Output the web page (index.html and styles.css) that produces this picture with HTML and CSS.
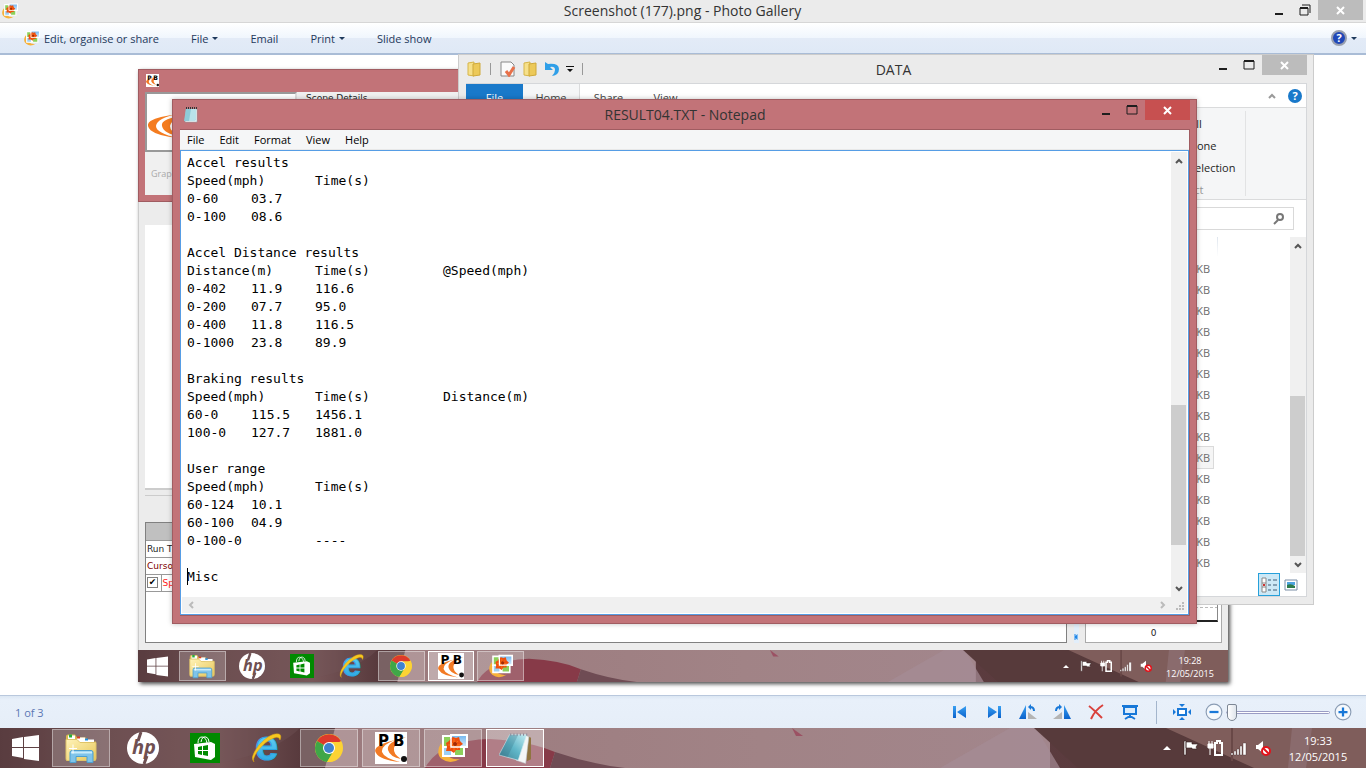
FILE: index.html
```html
<!DOCTYPE html>
<html lang="en">
<head>
  <meta charset="UTF-8">
  <meta name="viewport" content="width=device-width, initial-scale=1.0">
  <title>Screenshot (177).png - Photo Gallery</title>
  <link rel="stylesheet" href="styles.css">
</head>
<body>
  <!-- Icons -->
  <svg class="sprite" aria-hidden="true">
    <defs>
      <linearGradient id="gFolder" x1="0" y1="0" x2="1" y2="1"><stop offset="0" stop-color="#fff3b8"/><stop offset="1" stop-color="#e8c75a"/></linearGradient>
      <linearGradient id="gPad" x1="0" y1="1" x2="1" y2="0"><stop offset="0" stop-color="#3f7f92"/><stop offset=".5" stop-color="#5fb6c8"/><stop offset="1" stop-color="#c4ecf2"/></linearGradient>
      <linearGradient id="gIe" x1="0" y1="0" x2="0" y2="1"><stop offset="0" stop-color="#7fe0fb"/><stop offset="1" stop-color="#1f9fe0"/></linearGradient>
      <linearGradient id="gSky" x1="0" y1="0" x2="0" y2="1"><stop offset="0" stop-color="#6fb4ee"/><stop offset="1" stop-color="#d9eefc"/></linearGradient>
      <linearGradient id="gBlue" x1="0" y1="0" x2="0" y2="1"><stop offset="0" stop-color="#39a0f2"/><stop offset="1" stop-color="#0a62cc"/></linearGradient>
      <linearGradient id="gWood" x1="0" y1="0" x2="1" y2="0"><stop offset="0" stop-color="#4c2f32"/><stop offset=".08" stop-color="#6b4c4e"/><stop offset=".16" stop-color="#785759"/><stop offset=".22" stop-color="#583a3d"/><stop offset="1" stop-color="#5c3c3f"/></linearGradient>
      <linearGradient id="gPink" x1="0" y1="0" x2="1" y2="0"><stop offset="0" stop-color="#9b7a7d"/><stop offset=".6" stop-color="#a18386"/><stop offset="1" stop-color="#a2868c"/></linearGradient>
    </defs>

    <symbol id="wall" viewBox="0 0 1366 40" preserveAspectRatio="none">
      <rect width="1366" height="40" fill="url(#gWood)"/>
      <path d="M0 0H300Q270 30 190 40H0z" fill="#74555a" opacity=".35"/>
      <path d="M335 0H1050V40H325z" fill="url(#gPink)"/>
      <path d="M425 40Q440 12 490 11Q530 13 555 24L550 40z" fill="#873a48"/>
      <path d="M555 24Q590 36 625 40H550z" fill="#6f4c54"/>
      <path d="M792 0l11 8-7 0z" fill="#98304c" opacity=".6"/>
      <path d="M940 40L1010 0H1036L1060 40z" fill="#a58c96" opacity=".7"/>
      <path d="M1034 0H1168L1256 40H1078z" fill="#573a3b"/>
      <path d="M1166 0H1366V40H1254z" fill="#7f5d5b"/>
      <path d="M1232 0v33" stroke="#694847" stroke-width="2"/>
      <path d="M1292 0h20l-6 40h-18z" fill="#967a80" opacity=".5"/>
    </symbol>
    <symbol id="win" viewBox="0 0 27 26"><path d="M0 4l11-2v10H0zM12 2l15-2v12H12zM0 13h11v10L0 21zM12 13h15v13l-15-2z" fill="#fff"/></symbol>
    <symbol id="explorer" viewBox="0 0 32 29">
      <path d="M1 3q0-2 2-2h7l2 3h9l2 4h8v19H1z" fill="#d9b850"/>
      <path d="M3 2h7v5H3zM12 4h8v5h-8zM20 6h9v5h-9z" fill="#fff"/>
      <path d="M4 1h3v3H4z" fill="#24ad3b"/><path d="M12 3h3v2h-3z" fill="#dc3e22"/><path d="M20 5h3v2h-3z" fill="#1f8fe0"/>
      <path d="M1 6h11l3 3h16v16q0 2-2 2H2q-1 0-1-2z" fill="url(#gFolder)" stroke="#e0c468"/>
      <path d="M5 29V19q0-2 2-2h19q2 0 2 2v10h-6v-6H11v6z" fill="#7fc4ea" stroke="#4da0d0"/>
      <path d="M6 19h21" stroke="#c9ecfb" stroke-width="2"/>
      <path d="M8 11v9M4 15h8" stroke="#fff"/>
    </symbol>
    <symbol id="hp" viewBox="0 0 32 32">
      <circle cx="16" cy="16" r="16" fill="#fff"/>
      <text x="5" y="22" class="hp-text">hp</text>
      <path d="M14 0l-3 9M20 24l-3 8" stroke="#6f5052" stroke-width="3"/>
    </symbol>
    <symbol id="store" viewBox="0 0 30 30">
      <rect width="30" height="30" fill="#008a00"/>
      <path d="M8 10q0-6 4-6t5 6M11 9q1-6 5-5 3 1 3 5" fill="none" stroke="#fff"/>
      <path d="M4 11l17-2 4 2v13l-4 3L5 24z" fill="#fff"/>
      <path d="M8 14l4-1v4H8zM13 13l5-1v5h-5zM8 18h4v4l-4-1zM13 18h5v5l-5-1z" fill="#008a00"/>
    </symbol>
    <symbol id="ie" viewBox="0 0 32 32">
      <text x="4" y="28" class="ie-text">e</text>
      <path d="M3 30Q-2 26 8 13 20 0 28 2q3 1 1 6-1-4-6-2Q14 9 6 20q-5 8-3 10z" fill="#f7c81f" stroke="#d9a012" stroke-width=".5"/>
    </symbol>
    <symbol id="chrome" viewBox="0 0 28 28">
      <circle cx="14" cy="14" r="14" fill="#fcd334"/>
      <path d="M14 14L2 7A14 14 0 0 1 26 7z" fill="#dd3a2b"/>
      <path d="M2 7a14 14 0 0 0 10 21l7-12-5-2z" fill="#3fa648"/>
      <path d="M14 8h12A14 14 0 0 1 12 28l8-12z" fill="#fcd334"/>
      <circle cx="14" cy="14" r="6" fill="#fff"/><circle cx="14" cy="14" r="5" fill="#3f82cf"/>
    </symbol>
    <symbol id="pb" viewBox="0 0 32 32">
      <rect width="32" height="32" fill="#fff"/>
      <path d="M20 8Q-4 14 1 21q4 7 24 9-16-4-18-10Q6 13 20 8z" fill="#f27a24"/>
      <path d="M31 5Q11 10 13 18q2 7 13 9-8-5-7-11Q21 9 31 5z" fill="#f27a24"/>
      <text x="3" y="14" class="pb-text">P</text><text x="18" y="14" class="pb-text">B</text>
      <circle cx="29" cy="27" r="3" fill="#111"/>
    </symbol>
    <symbol id="gallery" viewBox="0 0 30 30">
      <path d="M3 10Q-3 21 4 26q8 6 18 0-9 1-13-4-4-4-6-12z" fill="#f6b13a"/>
      <path d="M5 3h10v11H5z" fill="#8ccf5a" stroke="#fff" stroke-width="2"/>
      <path d="M16 14h10v9H16z" fill="#8ccf5a" stroke="#fff" stroke-width="2"/>
      <path d="M5 14h9v9H5z" fill="#9cd0f4" stroke="#fff" stroke-width="2"/>
      <path d="M13 2h16v12H13z" fill="url(#gSky)" stroke="#fff" stroke-width="2"/>
      <path d="M15 4l3 1 3-1 1 4 3 3-3 2 0 4-4 0-2 3-3-2-5 0 1-4-1-4 3-2 2-3z" fill="#ee4d0c"/>
      <path d="M16 6v12M10 12h12M12 8l8 8M20 8l-8 8" stroke="#ff8a1c" stroke-width=".7"/>
      <path d="M13 2v12h16" fill="none" stroke="#fff" stroke-width="1.5"/>
      <circle cx="17" cy="11" r="2" fill="#a32a05"/>
    </symbol>
    <symbol id="notepad" viewBox="0 0 30 29">
      <path d="M26 3l4 2v20l-4 2z" fill="#8f7440"/>
      <path d="M24 2l4 2-3 25-9-3z" fill="#f4f6f6" stroke="#b9c4c8" stroke-width=".5"/>
      <path d="M10 2h16l-8 24L0 21z" fill="url(#gPad)" stroke="#d8eef2" stroke-width=".6"/>
      <path d="M10 2h8L8 23l-8-2z" fill="#2f6478" opacity=".25"/>
      <path d="M11 1v2M14 1v2M17 1v2M20 1v2M23 1v2M26 1v2" stroke="#889" stroke-width="1"/>
    </symbol>
    <symbol id="padSmall" viewBox="0 0 16 16">
      <path d="M3 2h11v13H2z" fill="#f7fbfb" stroke="#8fa0a4" stroke-width=".6"/>
      <path d="M3 2h10v10l-1 2H1z" fill="#8fcbd8"/>
      <path d="M8 2h5v10l-1 2H6z" fill="#b9e2ea"/>
      <path d="M3 1h11" stroke="#333" stroke-dasharray="1 1" stroke-width="2"/>
    </symbol>
    <symbol id="up" viewBox="0 0 8 4"><path d="M4 0l4 4H0z" fill="#fff"/></symbol>
    <symbol id="flag" viewBox="0 0 16 16"><path d="M1 1h2v14H1zM3 2h6v2h6l-2 3 1 2H9V8H3z" fill="#fff" stroke="#33201f" stroke-width=".6"/></symbol>
    <symbol id="battery" viewBox="0 0 16 16">
      <path d="M8 3h2V1h3v2h2v12H8z" fill="none" stroke="#fff" stroke-width="2"/>
      <path d="M2 1v3M5 1v3M1 4h5v4H1zM3 8v7" fill="#fff" stroke="#fff"/>
    </symbol>
    <symbol id="signal" viewBox="0 0 16 16"><path d="M0 13h2v2H0zM3 11h2v4H3zM6 9h2v6H6zM9 6h2v9H9zM12 3h3v12h-3z" fill="#fff" stroke="#4a3332" stroke-width=".4"/></symbol>
    <symbol id="volume" viewBox="0 0 16 16">
      <path d="M1 5h2l5-4v12l-5-4H1z" fill="#fff"/>
      <circle cx="11" cy="11" r="4" fill="#fff" stroke="#e3131b" stroke-width="2"/><path d="M8 8l6 6" stroke="#e3131b" stroke-width="2"/>
    </symbol>
    <symbol id="min" viewBox="0 0 12 12"><path d="M2 9h8v2H2z" fill="currentColor"/></symbol>
    <symbol id="max" viewBox="0 0 12 12"><path d="M1 2h10v8H1z" fill="none" stroke="currentColor"/><path d="M1 2h10" stroke="currentColor" stroke-width="2"/></symbol>
    <symbol id="restore" viewBox="0 0 12 12"><path d="M1 4h8v7H1z" fill="none" stroke="currentColor"/><path d="M1 4h8" stroke="currentColor" stroke-width="2"/><path d="M3 1h8v8" fill="none" stroke="currentColor"/></symbol>
    <symbol id="close" viewBox="0 0 12 12"><path d="M2 3l7 7M9 3l-7 7" stroke="#fff" stroke-width="2"/></symbol>
    <symbol id="chev" viewBox="0 0 8 6"><path d="M1 5l3-3 3 3" fill="none" stroke="currentColor" stroke-width="2"/></symbol>
    <symbol id="caret" viewBox="0 0 6 3"><path d="M0 0h6L3 3z" fill="currentColor"/></symbol>
    <symbol id="folder" viewBox="0 0 14 16"><path d="M1 2l6-1v14l-6-1z" fill="#f6e08a" stroke="#d6b548"/><path d="M6 3l7-1v12l-7 1z" fill="#ecc959" stroke="#cfa93a"/></symbol>
  </svg>

  <header class="titlebar">
    <svg class="i16 titlebar-icon"><use href="#gallery"/></svg>
    <h1 class="title">Screenshot (177).png - Photo Gallery</h1>
    <div class="win-buttons">
      <button aria-label="Minimise"><svg class="i12"><use href="#min"/></svg></button>
      <button aria-label="Restore"><svg class="i12"><use href="#restore"/></svg></button>
      <button class="close" aria-label="Close"><svg class="i12"><use href="#close"/></svg></button>
    </div>
  </header>

  <nav class="commands">
    <button><svg class="i16"><use href="#gallery"/></svg>Edit, organise or share</button>
    <button>File<svg class="drop"><use href="#caret"/></svg></button>
    <button>Email</button>
    <button>Print<svg class="drop"><use href="#caret"/></svg></button>
    <button>Slide show</button>
    <button class="help" aria-label="Help">
      <svg class="i16" viewBox="0 0 16 16"><circle cx="8" cy="8" r="7" fill="#2148b8" stroke="#999fae" stroke-width="2"/><text x="8" y="12" class="q-text">?</text></svg>
      <svg class="drop"><use href="#caret"/></svg>
    </button>
  </nav>

  <main class="viewer">
    <div class="photo">
      <!-- App at the back of the desktop -->
      <div class="app">
        <div class="plot"></div>
        <div class="panes">
          <div class="runs">
            <table>
              <tr><th colspan="2"></th></tr>
              <tr><td colspan="2">Run Time</td></tr>
              <tr class="cursor-row"><td colspan="2">Cursor</td></tr>
              <tr class="speed-row"><td><input type="checkbox" id="speed" checked></td><td><label for="speed">Speed</label></td></tr>
            </table>
          </div>
          <div class="splitter"><svg viewBox="0 0 4 8"><path d="M0 1h1v2l2-2v6L1 5v2H0z" fill="#1d86e8"/></svg></div>
          <div class="chart">
            <div class="chart-area"></div>
            <span>0</span>
          </div>
        </div>
      </div>

      <div class="taskbar small">
        <svg class="wall"><use href="#wall"/></svg>
        <button class="start" aria-label="Start"><svg><use href="#win"/></svg></button>
        <div class="tasks">
          <button class="open" aria-label="File Explorer"><svg><use href="#explorer"/></svg></button>
          <button aria-label="HP"><svg><use href="#hp"/></svg></button>
          <button aria-label="Store"><svg class="store"><use href="#store"/></svg></button>
          <button aria-label="Internet Explorer"><svg><use href="#ie"/></svg></button>
          <button class="open" aria-label="Chrome"><svg class="chrome"><use href="#chrome"/></svg></button>
          <button class="open active" aria-label="Performance Box"><svg><use href="#pb"/></svg></button>
          <button class="open" aria-label="Photo Gallery"><svg class="gallery"><use href="#gallery"/></svg></button>
        </div>
        <div class="tray">
          <svg class="up"><use href="#up"/></svg>
          <svg><use href="#flag"/></svg>
          <svg><use href="#battery"/></svg>
          <svg><use href="#signal"/></svg>
          <svg><use href="#volume"/></svg>
        </div>
        <div class="clock"><span>19:28</span><span>12/05/2015</span></div>
      </div>
    </div>

    <!-- Performance Box window -->
    <section class="window pbox">
      <div class="pbox-title"><svg><use href="#pb"/></svg></div>
      <div class="pbox-body">
        <div class="pbox-side">
          <div class="pbox-logo"><svg viewBox="0 0 40 24"><path d="M30 0Q-2 4 0 12q2 9 30 12Q8 19 8 12 9 4 30 0z" fill="#f47c20"/><path d="M40 1Q12 4 14 12q2 8 18 10-10-4-10-10Q24 4 40 1z" fill="#f47c20"/></svg></div>
          <span class="pbox-tab">Graph</span>
        </div>
        <span class="pbox-label">Scope Details</span>
      </div>
    </section>

    <!-- Explorer window -->
    <section class="window folder">
      <div class="folder-title">
        <div class="quick">
          <svg class="i16"><use href="#folder"/></svg>
          <i></i>
          <svg class="i16" viewBox="0 0 16 16"><path d="M1 1h10l3 3v11H1z" fill="#fafafa" stroke="#888"/><path d="M6 10l3 4 5-8" fill="none" stroke="#e8714a" stroke-width="3"/></svg>
          <svg class="i16"><use href="#folder"/></svg>
          <svg class="i16" viewBox="0 0 16 16"><path d="M1 1v8h8L6 6q5-1 5 3 0 3-3 6 7-1 7-7 0-6-11-5z" fill="#2f9fe8"/></svg>
          <svg class="i8" viewBox="0 0 8 8"><path d="M0 1h8v1H0zM1 4h6L4 7z" fill="#111"/></svg>
          <i></i>
        </div>
        <h2 class="title">DATA</h2>
        <div class="win-buttons">
          <button aria-label="Minimise"><svg class="i12"><use href="#min"/></svg></button>
          <button aria-label="Maximise"><svg class="i12"><use href="#max"/></svg></button>
          <button class="close" aria-label="Close"><svg class="i12"><use href="#close"/></svg></button>
        </div>
      </div>
      <div class="folder-body">
        <div class="tabs">
          <button class="tab-file">File</button>
          <button class="tab-home">Home</button>
          <button>Share</button>
          <button>View</button>
          <div class="tabs-end">
            <svg class="chev"><use href="#chev"/></svg>
            <svg class="i14" viewBox="0 0 14 14"><circle cx="7" cy="7" r="7" fill="#1979ca"/><text x="7" y="11" class="q-text">?</text></svg>
          </div>
        </div>
        <div class="ribbon">
          <div class="ribbon-group">
            <button>Select all</button>
            <button>Select none</button>
            <button>Invert selection</button>
            <span>Select</span>
          </div>
        </div>
        <div class="address">
          <div class="search">
            <input type="text" aria-label="Search DATA">
            <svg class="i12" viewBox="0 0 12 12"><circle cx="7" cy="4" r="3" fill="none" stroke="#777" stroke-width="2"/><path d="M5 7l-4 4" stroke="#777" stroke-width="2"/></svg>
          </div>
        </div>
        <div class="files">
          <table>
            <tr class="files-head"><th></th></tr>
            <tr><td>KB</td></tr>
            <tr><td>KB</td></tr>
            <tr><td>KB</td></tr>
            <tr><td>KB</td></tr>
            <tr><td>KB</td></tr>
            <tr><td>KB</td></tr>
            <tr><td>KB</td></tr>
            <tr><td>KB</td></tr>
            <tr><td>KB</td></tr>
            <tr class="selected"><td>KB</td></tr>
            <tr><td>KB</td></tr>
            <tr><td>KB</td></tr>
            <tr><td>KB</td></tr>
            <tr><td>KB</td></tr>
            <tr><td>KB</td></tr>
          </table>
          <i class="column-line"></i>
          <div class="scroll-v">
            <button aria-label="Scroll up"><svg class="chev"><use href="#chev"/></svg></button>
            <div class="track"><div class="thumb"></div></div>
            <button aria-label="Scroll down"><svg class="chev down"><use href="#chev"/></svg></button>
          </div>
        </div>
        <div class="views">
          <button class="on" aria-label="Details"><svg class="i16" viewBox="0 0 16 16"><path d="M1 1h4v14H1zM1 6h4M1 10h4" fill="#fff" stroke="#888"/><path d="M7 3h3M12 3h4M7 8h3M12 8h4M7 13h3M12 13h4" stroke="#3d5a75"/><path d="M2 8h2" stroke="#c33" stroke-width="2"/></svg></button>
          <button aria-label="Large icons"><svg class="i16" viewBox="0 0 16 16"><path d="M2 3h12v10H2z" fill="#fff" stroke="#7a8ea6"/><path d="M4 5h8v3H4z" fill="#4da3e0"/><path d="M4 8q4-2 8 1v2H4z" fill="#2c7a4b"/></svg></button>
        </div>
      </div>
    </section>

    <!-- Notepad window -->
    <section class="window note">
      <div class="note-title">
        <svg class="i16"><use href="#padSmall"/></svg>
        <h2 class="title">RESULT04.TXT - Notepad</h2>
        <div class="win-buttons">
          <button aria-label="Minimise"><svg class="i12"><use href="#min"/></svg></button>
          <button aria-label="Maximise"><svg class="i12"><use href="#max"/></svg></button>
          <button class="close" aria-label="Close"><svg class="i12"><use href="#close"/></svg></button>
        </div>
      </div>
      <div class="note-body">
        <div class="note-menu">
          <button>File</button>
          <button>Edit</button>
          <button>Format</button>
          <button>View</button>
          <button>Help</button>
        </div>
        <div class="editor">
          <textarea aria-label="Text" spellcheck="false">Accel results
Speed(mph)&#9;Time(s)
0-60&#9;03.7
0-100&#9;08.6

Accel Distance results
Distance(m)&#9;Time(s)&#9;&#9;@Speed(mph)
0-402&#9;11.9&#9;116.6
0-200&#9;07.7&#9;95.0
0-400&#9;11.8&#9;116.5
0-1000&#9;23.8&#9;89.9

Braking results
Speed(mph)&#9;Time(s)&#9;&#9;Distance(m)
60-0&#9;115.5&#9;1456.1
100-0&#9;127.7&#9;1881.0

User range
Speed(mph)&#9;Time(s)
60-124&#9;10.1
60-100&#9;04.9
0-100-0&#9;&#9;----

Misc</textarea>
          <span class="text-caret"></span>
          <div class="scroll-v">
            <button aria-label="Scroll up"><svg class="chev"><use href="#chev"/></svg></button>
            <div class="track"><div class="thumb"></div></div>
            <button aria-label="Scroll down"><svg class="chev down"><use href="#chev"/></svg></button>
          </div>
          <div class="scroll-h">
            <button aria-label="Scroll left"><svg class="chev left"><use href="#chev"/></svg></button>
            <button aria-label="Scroll right"><svg class="chev right"><use href="#chev"/></svg></button>
          </div>
          <svg class="grip" viewBox="0 0 16 16"><path d="M11 5h2v2h-2zM8 8h2v2H8zM11 8h2v2h-2zM5 11h2v2H5zM8 11h2v2H8zM11 11h2v2h-2z" fill="#bbb"/></svg>
        </div>
      </div>
    </section>
  </main>

  <footer class="controls">
    <span class="count">1 of 3</span>
    <button aria-label="Previous"><svg class="i16" viewBox="0 0 16 16"><path d="M1 2h3v12H1zM14 2v12L5 8z" fill="url(#gBlue)"/></svg></button>
    <button aria-label="Next"><svg class="i16" viewBox="0 0 16 16"><path d="M12 2h3v12h-3zM2 2v12l9-6z" fill="url(#gBlue)"/></svg></button>
    <button aria-label="Rotate left"><svg class="i18" viewBox="0 0 18 16"><path d="M7 1v14H0z" fill="url(#gBlue)"/><path d="M9 8v7h9z" fill="#b4b4b4"/><path d="M15 7q0-4-4-4" fill="none" stroke="#1878d8" stroke-width="2"/><path d="M12 0v6L9 3z" fill="#1878d8"/></svg></button>
    <button aria-label="Rotate right"><svg class="i18" viewBox="0 0 18 16"><path d="M11 1v14h7z" fill="url(#gBlue)"/><path d="M9 8v7H0z" fill="#b4b4b4"/><path d="M3 7q0-4 4-4" fill="none" stroke="#1878d8" stroke-width="2"/><path d="M6 0v6l3-3z" fill="#1878d8"/></svg></button>
    <button aria-label="Delete"><svg class="i16" viewBox="0 0 16 16"><path d="M1 2q4 3 13 12M15 1Q7 6 3 15" fill="none" stroke="#d9413c" stroke-width="2"/></svg></button>
    <button aria-label="Slide show"><svg class="i16" viewBox="0 0 16 16"><path d="M0 1h16v2H0z" fill="#1878d8"/><path d="M2 3h12v7H2z" fill="#dcecfb" stroke="#1878d8" stroke-width="2"/><path d="M8 10v2M3 15l5-3 5 3" fill="none" stroke="#1878d8" stroke-width="2"/></svg></button>
    <i class="rule"></i>
    <button aria-label="Fit to window"><svg class="i18" viewBox="0 0 18 16"><path d="M5 5h8v6H5z" fill="#fff" stroke="#1878d8" stroke-width="2"/><path d="M6 0h6L9 3zM6 16h6l-3-3zM0 5v6l3-3zM18 5v6l-3-3z" fill="#1878d8"/></svg></button>
    <button class="round zoom-out" aria-label="Zoom out"><svg viewBox="0 0 16 16"><circle cx="8" cy="8" r="7" fill="#f5f9fd" stroke="#8a9cb4"/><path d="M4 8h8" stroke="#1878d8" stroke-width="2"/></svg></button>
    <input type="range" min="0" max="100" value="0" aria-label="Zoom">
    <button class="round" aria-label="Zoom in"><svg viewBox="0 0 16 16"><circle cx="8" cy="8" r="7" fill="#f5f9fd" stroke="#8a9cb4"/><path d="M4 8h8M8 4v8" stroke="#1878d8" stroke-width="2"/></svg></button>
  </footer>

  <div class="taskbar">
    <svg class="wall"><use href="#wall"/></svg>
    <button class="start" aria-label="Start"><svg><use href="#win"/></svg></button>
    <div class="tasks">
      <button class="open" aria-label="File Explorer"><svg><use href="#explorer"/></svg></button>
      <button aria-label="HP"><svg><use href="#hp"/></svg></button>
      <button aria-label="Store"><svg class="store"><use href="#store"/></svg></button>
      <button aria-label="Internet Explorer"><svg><use href="#ie"/></svg></button>
      <button class="open" aria-label="Chrome"><svg class="chrome"><use href="#chrome"/></svg></button>
      <button class="open" aria-label="Performance Box"><svg><use href="#pb"/></svg></button>
      <button class="open" aria-label="Photo Gallery"><svg class="gallery"><use href="#gallery"/></svg></button>
      <button class="open active" aria-label="Notepad"><svg><use href="#notepad"/></svg></button>
    </div>
    <div class="tray">
      <svg class="up"><use href="#up"/></svg>
      <svg><use href="#flag"/></svg>
      <svg><use href="#battery"/></svg>
      <svg><use href="#signal"/></svg>
      <svg><use href="#volume"/></svg>
    </div>
    <div class="clock"><span>19:33</span><span>12/05/2015</span></div>
  </div>
</body>
</html>
```
FILE: styles.css
```css
* {
  box-sizing: border-box;
}

body {
  display: flex;
  flex-direction: column;
  height: 100vh;
  margin: 0;
  overflow: hidden;
  font-family: "Open Sans", "Noto Sans", sans-serif;
  font-size: 11px;
  color: #1e1e1e;
  background: #fff;
}

button {
  display: flex;
  align-items: center;
  justify-content: center;
  padding: 0;
  border: none;
  background: none;
  font: inherit;
  color: inherit;
  white-space: nowrap;
}

table {
  border-collapse: collapse;
}

svg {
  display: block;
  flex: none;
}

.sprite {
  position: absolute;
  width: 0;
  height: 0;
}

.i8 { width: 8px; height: 8px; }
.i12 { width: 12px; height: 12px; }
.i14 { width: 14px; height: 14px; }
.i16 { width: 16px; height: 16px; }
.i18 { width: 18px; height: 16px; }
.drop { width: 6px; height: 3px; margin-left: 4px; }
.chev { width: 8px; height: 6px; }
.down { transform: rotate(180deg); }
.left { transform: rotate(-90deg); }
.right { transform: rotate(90deg); }

.hp-text { font: italic bold 20px "Open Sans", sans-serif; fill: #6f5052; }
.ie-text { font: bold 42px "Liberation Sans", sans-serif; fill: url(#gIe); stroke: #2ba6e4; stroke-width: 1; }
.pb-text { font: bold 15px "DejaVu Sans", sans-serif; fill: #000; }
.q-text { font: bold 11px "Open Sans", sans-serif; fill: #fff; text-anchor: middle; }

.title {
  margin: 0;
  font-size: 14px;
  font-weight: normal;
  line-height: 20px;
  color: #333;
  white-space: nowrap;
}

/* Photo Gallery */
.titlebar {
  display: grid;
  grid-template-columns: 1fr auto 1fr;
  height: 23px;
  padding: 0 3px 0 2px;
  background: #ebebeb;
  border-bottom: 1px solid #d6d6d6;
}

.titlebar-icon {
  margin-top: 3px;
}

.titlebar .title {
  padding-top: 1px;
}

.win-buttons {
  display: flex;
  justify-content: flex-end;
  align-items: flex-start;
  color: #1e1e1e;
}

.win-buttons button {
  width: 26px;
  height: 20px;
}

.win-buttons .close {
  width: 45px;
  background: #bcbcbc;
}

.commands {
  display: flex;
  align-items: center;
  gap: 32px;
  height: 32px;
  padding: 0 9px 0 24px;
  border-bottom: 2px solid #a9bcd6;
  background: linear-gradient(#fff, #f0f6fd 50%, #e3ebf7 51%, #dfe9f6);
  color: #1e395b;
}

.commands .i16 {
  margin-right: 4px;
}

.commands .help {
  margin-left: auto;
}

.commands .help .drop {
  margin-left: 0;
}

.viewer {
  position: relative;
  flex: 1;
  min-height: 0;
  padding: 14px 138px 13px;
}

.photo {
  display: flex;
  flex-direction: column;
  height: 100%;
  background: #ececec;
  box-shadow: 2px 2px 4px rgba(0, 0, 0, 0.7);
}

.app {
  flex: 1;
  display: flex;
  flex-direction: column;
  padding: 156px 6px 7px;
  border-left: 1px solid #ccc;
}

.plot {
  flex: 1;
  background: #fff;
  border-bottom: 2px solid #ccc;
}

.panes {
  display: flex;
  height: 148px;
  margin: 5px -6px 0 0;
  padding: 26px 6px 0 0;
  border-top: 1px solid #ccc;
}

.runs {
  flex: 1;
  background: #fff;
  border: 1px solid #808080;
}

.runs table {
  width: 100%;
  font: 9px/16px "DejaVu Sans", sans-serif;
  white-space: nowrap;
}

.runs th {
  height: 17px;
  background: #c0c0c0;
}

.runs td,
.runs th {
  padding: 0 1px;
  border-bottom: 1px solid #999;
}

.cursor-row { color: #800000; }
.speed-row { color: #ff2020; }

.speed-row td:first-child {
  width: 15px;
  border-right: 1px solid #999;
}

.runs input {
  display: block;
  width: 11px;
  height: 11px;
  margin: 0;
  appearance: none;
  border: 1px solid #808080;
  background: #fff;
}

.runs input:checked::before {
  content: "✔";
  display: block;
  font: 9px/9px "DejaVu Sans", sans-serif;
  text-align: center;
  color: #000;
}

.splitter {
  display: flex;
  align-items: flex-end;
  width: 5px;
  margin: 0 6px 0 7px;
  padding-bottom: 2px;
  background: #e2eefa;
}

.splitter svg {
  width: 5px;
  height: 8px;
}

.chart {
  display: flex;
  flex-direction: column;
  align-items: center;
  width: 137px;
  padding: 0 3px 1px;
  background: #fff;
  border: 1px solid #aaa;
  font: 9px/15px "DejaVu Sans", sans-serif;
}

.chart-area {
  flex: 1;
  width: 100%;
  margin-bottom: 4px;
  border: 1px solid #888;
  border-bottom: 2px solid #222;
  background: repeating-linear-gradient(90deg, #bbb 0 3px, transparent 3px 5px) 0 calc(100% - 12px) / 100% 1px no-repeat;
}

/* Windows on the desktop */
.window {
  position: absolute;
  display: flex;
  flex-direction: column;
}

.pbox {
  top: 14px;
  left: 138px;
  width: 400px;
  height: 133px;
  padding: 0 6px 6px;
  background: #c27378;
  border: 1px solid #a05c61;
}

.pbox-title {
  height: 24px;
  padding: 4px 0 0 1px;
}

.pbox-title svg {
  width: 13px;
  height: 13px;
}

.pbox-body {
  flex: 1;
  display: flex;
  gap: 9px;
  background: #f0f0f0;
}

.pbox-side {
  width: 152px;
}

.pbox-logo {
  height: 60px;
  padding: 20px 1px 0;
  background: #fff;
  border: 2px solid #999;
  border-right-color: #ddd;
}

.pbox-logo svg {
  width: 40px;
  height: 24px;
}

.pbox-tab {
  display: block;
  padding: 15px 6px;
  font-size: 9px;
  color: #aaa;
}

.pbox-label {
  font: 9px/12px "DejaVu Sans", sans-serif;
}

.folder {
  top: -1px;
  left: 458px;
  right: 52px;
  bottom: 90px;
  padding: 0 6px 7px 7px;
  background: #ebebeb;
  border: 1px solid #ccc;
}

.folder-title {
  display: grid;
  grid-template-columns: 1fr auto 1fr;
  height: 29px;
}

.folder-title .title {
  padding: 5px 0 0 14px;
}

.quick {
  display: flex;
  align-items: center;
  gap: 6px;
}

.quick i {
  width: 1px;
  height: 12px;
  margin: 0 3px 0 2px;
  background: #999;
}

.folder-body {
  flex: 1;
  display: flex;
  flex-direction: column;
  background: #fff;
  border: 1px solid #d5d7da;
  border-left: none;
}

.tabs {
  display: flex;
  height: 24px;
  border-bottom: 1px solid #dadbdc;
}

.tabs button {
  width: 57px;
  padding-top: 3px;
  color: #444;
}

.tabs .tab-file {
  color: #fff;
  background: #1979ca;
}

.tabs .tab-home {
  background: #f5f6f7;
  border-right: 1px solid #dadbdc;
}

.tabs-end {
  display: flex;
  align-items: center;
  gap: 12px;
  margin-left: auto;
  padding-right: 4px;
  color: #999;
}

.ribbon {
  display: flex;
  justify-content: flex-end;
  height: 92px;
  padding: 3px 60px 3px 0;
  background: #f5f6f7;
  border-bottom: 1px solid #dadbdc;
}

.ribbon-group {
  display: flex;
  flex-direction: column;
  align-items: flex-start;
  width: 89px;
  padding-top: 2px;
  border-right: 1px solid #e2e3e4;
}

.ribbon-group button,
.ribbon-group span {
  height: 22px;
  flex: none;
  line-height: 22px;
}

.ribbon-group span {
  padding-left: 16px;
  color: #999;
}

.address {
  display: flex;
  justify-content: flex-end;
  padding: 7px 12px;
}

.search {
  display: flex;
  align-items: center;
  width: 200px;
  height: 23px;
  padding-right: 8px;
  border: 1px solid #d9d9d9;
}

.search input {
  flex: 1;
  min-width: 0;
  border: none;
}

.files {
  flex: 1;
  display: flex;
  justify-content: flex-end;
  min-height: 0;
}

.files table {
  width: 120px;
  height: 0;
  color: #6d6d6d;
}

.files td {
  height: 21px;
  padding: 0 3px;
  line-height: 19px;
  text-align: right;
}

.files th {
  height: 21px;
  padding: 0;
}

.files .selected td {
  background: #f5f5f5;
  outline: 1px solid #dadada;
}

.column-line {
  width: 1px;
  height: 20px;
  margin: 0 72px 0 4px;
  background: linear-gradient(#dfe6ee, #fff);
}

.scroll-v {
  display: flex;
  flex-direction: column;
  width: 16px;
  background: #f0f0f0;
  color: #555;
}

.scroll-v button {
  height: 17px;
}

.track {
  flex: 1;
  display: flex;
  flex-direction: column;
  justify-content: flex-end;
}

.thumb {
  height: 53%;
  margin-right: 1px;
  background: #cdcdcd;
}

.views {
  display: flex;
  justify-content: flex-end;
  height: 23px;
  padding-right: 4px;
}

.views button {
  width: 22px;
}

.views .on {
  background: #cce8f6;
  border: 1px solid #26a0da;
}

.note {
  top: 44px;
  left: 172px;
  right: 169px;
  bottom: 71px;
  padding: 0 6px 7px 7px;
  background: #c27378;
  border: 1px solid #a05c61;
  box-shadow: 0 0 5px rgba(0, 0, 0, 0.25);
}

.note-title {
  display: grid;
  grid-template-columns: 1fr auto 1fr;
  height: 29px;
}

.note-title .i16 {
  margin: 7px 0 0 3px;
}

.note-title .title {
  padding-top: 5px;
}

.note-title .close {
  background: #c75050;
}

.note-body {
  flex: 1;
  display: flex;
  flex-direction: column;
  border: 1px solid #a05c61;
  border-left: none;
}

.note-menu {
  display: flex;
  gap: 15px;
  height: 20px;
  padding-left: 7px;
  background: #f5f6f7;
  border-bottom: 1px solid #e8e8e8;
  color: #000;
}

.editor {
  position: relative;
  flex: 1;
  display: grid;
  grid-template-columns: 1fr 16px;
  grid-template-rows: 1fr 16px;
  padding: 1px;
  border: 1px solid #569de5;
  background: #fff;
}

.editor textarea {
  width: 100%;
  height: 100%;
  padding: 2px 5px 0;
  border: none;
  outline: none;
  resize: none;
  overflow: hidden;
  font: 13px/18px "DejaVu Sans Mono", monospace;
  tab-size: 64px;
  color: #000;
  background: #fff;
}

.text-caret {
  position: absolute;
  top: 417px;
  left: 6px;
  width: 1px;
  height: 17px;
  background: #000;
}

.editor .thumb {
  height: 34%;
  margin-bottom: 35px;
}

.scroll-h {
  display: flex;
  justify-content: space-between;
  background: #f0f0f0;
  color: #bbb;
}

.scroll-h button {
  width: 17px;
}

.grip {
  width: 16px;
  height: 16px;
  background: #f0f0f0;
}

/* Photo controls */
.controls {
  display: flex;
  align-items: center;
  height: 33px;
  padding: 0 14px 0 15px;
  border-top: 1px solid #b9c8dd;
  background: linear-gradient(#dce7f3, #e8f0fa 4px, #e6eef8);
}

.controls .count {
  margin-right: auto;
  color: #5b78b4;
}

.controls button {
  width: 34px;
  height: 24px;
}

.controls .rule {
  width: 1px;
  height: 23px;
  margin: 0 8px 0 9px;
  background: #a3b5cc;
}

.controls .round {
  width: 18px;
}

.controls .round svg {
  width: 18px;
  height: 18px;
}

.controls .zoom-out {
  margin-left: 6px;
}

.controls input {
  width: 104px;
  height: 20px;
  margin: 0 4px 0 3px;
  appearance: none;
  background: none;
}

.controls input::-webkit-slider-runnable-track {
  height: 3px;
  border: 1px solid #9a9cc4;
  border-radius: 2px;
  background: #fff;
}

.controls input::-webkit-slider-thumb {
  appearance: none;
  width: 10px;
  height: 17px;
  margin-top: -8px;
  border: 1px solid #7d8795;
  border-radius: 2px 2px 5px 5px;
  background: linear-gradient(90deg, #fff, #dfe5ec);
}

/* Taskbars */
.taskbar {
  position: relative;
  display: flex;
  height: 40px;
  color: #fff;
}

.wall {
  position: absolute;
  width: 100%;
  height: 100%;
  z-index: 0;
}

.start,
.tasks,
.tray,
.clock {
  position: relative;
}

.start {
  width: 52px;
  padding-right: 2px;
}

.start svg {
  width: 27px;
  height: 26px;
}

.tasks {
  display: flex;
  gap: 4px;
  width: 492px;
  padding: 1px 0;
  margin-right: auto;
}

.tasks button {
  flex: 1;
  border: 1px solid transparent;
}

.tasks .open {
  border-color: rgba(255, 255, 255, 0.4);
  background: rgba(255, 255, 255, 0.2);
}

.tasks .active {
  border-color: #fff;
  background: rgba(255, 255, 255, 0.35);
}

.tasks svg {
  width: 32px;
  height: 32px;
}

.tasks .store,
.tasks .gallery {
  width: 30px;
  height: 30px;
}

.tasks .chrome {
  width: 28px;
  height: 28px;
}

.tray {
  display: flex;
  align-items: center;
}

.tray svg {
  width: 24px;
  height: 16px;
}

.tray .up {
  height: 4px;
}

.clock {
  display: flex;
  flex-direction: column;
  align-items: center;
  justify-content: center;
  width: 86px;
  margin-right: 5px;
  padding-top: 2px;
  line-height: 16px;
}

.small {
  height: 32px;
}

.small .start {
  width: 41px;
}

.small .start svg {
  width: 21px;
  height: 21px;
}

.small .tasks {
  gap: 3px;
  width: 345px;
}

.small .tasks svg {
  width: 26px;
  height: 26px;
}

.small .tasks .store,
.small .tasks .gallery {
  width: 24px;
  height: 24px;
}

.small .tasks .chrome {
  width: 22px;
  height: 22px;
}

.small .tray svg {
  width: 20px;
  height: 12px;
}

.small .tray .up {
  height: 3px;
}

.small .clock {
  width: 68px;
  margin-right: 4px;
  font-size: 9px;
  line-height: 13px;
}
```
